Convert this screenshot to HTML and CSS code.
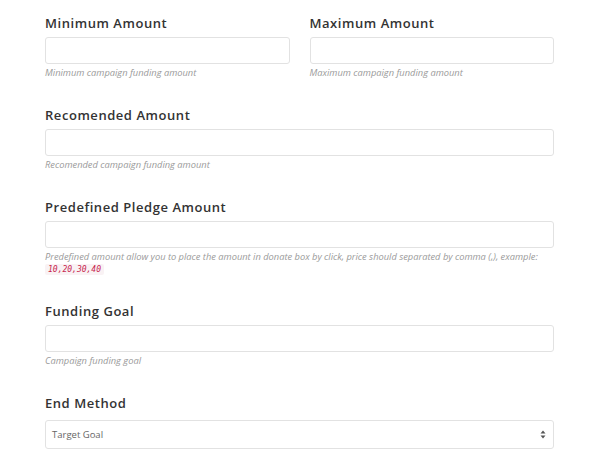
FILE: index.html
```html
<!DOCTYPE html>
<html>
<head>
<meta charset="utf-8">
<link rel="stylesheet" href="styles.css">
</head>
<body>
<div class="form">
  <div class="row">
    <div class="group">
      <label class="label">Minimum Amount</label>
      <input class="input" type="text">
      <p class="help">Minimum campaign funding amount</p>
    </div>
    <div class="group">
      <label class="label">Maximum Amount</label>
      <input class="input" type="text">
      <p class="help">Maximum campaign funding amount</p>
    </div>
  </div>
  <div class="group">
    <label class="label">Recomended Amount</label>
    <input class="input" type="text">
    <p class="help">Recomended campaign funding amount</p>
  </div>
  <div class="group">
    <label class="label">Predefined Pledge Amount</label>
    <input class="input" type="text">
    <p class="help">Predefined amount allow you to place the amount in donate box by click, price should separated by comma (,), example: <code class="code">10,20,30,40</code></p>
  </div>
  <div class="group">
    <label class="label">Funding Goal</label>
    <input class="input" type="text">
    <p class="help">Campaign funding goal</p>
  </div>
  <div class="group">
    <label class="label">End Method</label>
    <div class="select">
      <span class="select-text">Target Goal</span>
      <svg class="arrows" width="6" height="9" viewBox="0 0 6 9"><path d="M3 0.5 L5.5 3.5 H0.5 Z" fill="#555"/><path d="M3 8.5 L5.5 5.5 H0.5 Z" fill="#555"/></svg>
    </div>
  </div>
</div>
</body>
</html>
```
FILE: styles.css
```css
* { box-sizing: border-box; }
html, body { margin: 0; padding: 0; background: #fff; }
body { font-family: "Open Sans", "DejaVu Sans", sans-serif; color: #333; }
.form { padding: 16px 46px 0 45px; width: 600px; display: flex; flex-direction: column; gap: 29px; }
.row { display: flex; gap: 20px; }
.row .group { flex: 1; }
.group { display: flex; flex-direction: column; }
.label { font-size: 13px; font-weight: 600; letter-spacing: 0.55px; color: #333; line-height: 14px; margin-bottom: 7px; }
.input { height: 27px; border: 1px solid #e2e2e2; border-radius: 3px; background: #fff; padding: 0 8px; font-family: inherit; outline: none; }
.help { margin: 3px 0 0; font-size: 9.3px; font-style: italic; color: #9a9a9a; line-height: 12px; }
.code { font-family: "DejaVu Sans Mono", monospace; font-size: 8px; line-height: 8px; color: #c7254e; background: #f9f2f4; padding: 1px 3px; border-radius: 2px; font-style: italic; }
.select { height: 29px; border: 1px solid #e2e2e2; border-radius: 3px; display: flex; align-items: center; justify-content: space-between; padding: 0 7px 0 6px; margin-top: 3px; }
.select-text { font-size: 9.5px; color: #666; }
.arrows { display: block; }
```
